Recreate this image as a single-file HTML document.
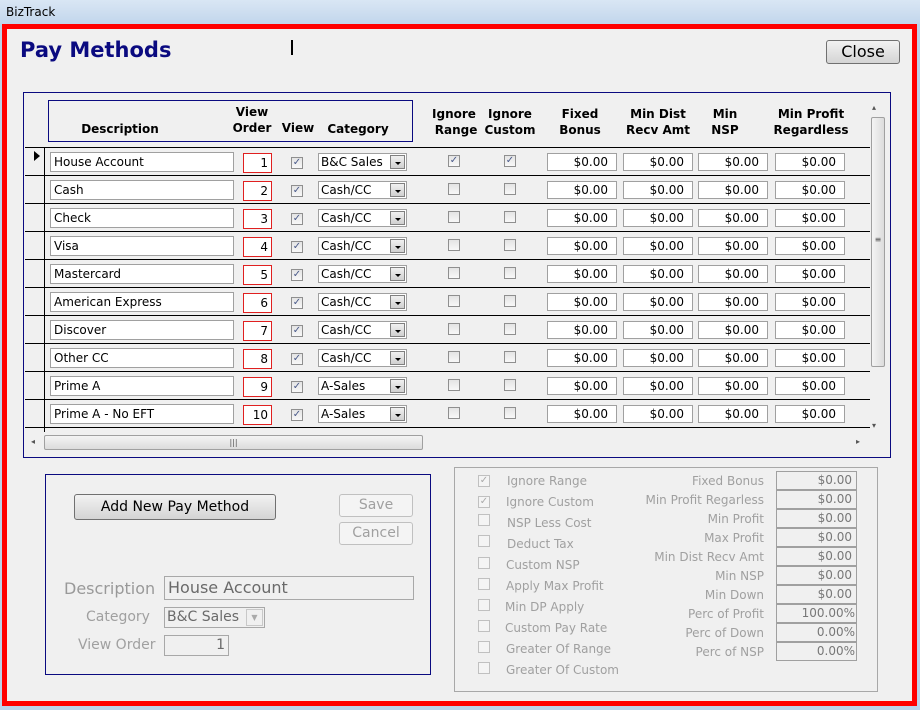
<!DOCTYPE html>
<html><head><meta charset="utf-8"><style>
*{box-sizing:border-box;margin:0;padding:0}
body{width:920px;height:710px;position:relative;overflow:hidden;background:#bcd3ea;font-family:"DejaVu Sans","Liberation Sans",sans-serif;font-size:12px;color:#000}
.a{position:absolute}
.tb{left:0;top:0;width:920px;height:24px;background:linear-gradient(#d9e6f4,#c2d6ec);font-size:12px;padding:5px 0 0 6px}
.frame{left:2px;top:24px;width:915px;height:682px;border:5px solid #f00;background:#f0f0f0}
.tx{background:#fff;border:1px solid #a0a0a0;height:20px;line-height:18px;padding:0 3px;white-space:nowrap;overflow:hidden}
.num{border:1px solid #e02020;background:#fff;text-align:right;padding-right:3px;height:20px;line-height:18px}
.cb{width:12px;height:12px;border:1px solid #8f8f8f;background:linear-gradient(#e4e4e4,#f8f8f8);font-size:10px;line-height:10px;text-align:center;color:#4a5a8a}
.sel{background:#fff;border:1px solid #a0a0a0;height:18px;line-height:16px;padding-left:2px}
.sel i{position:absolute;right:1px;top:1px;width:15px;height:14px;background:linear-gradient(#f0f0f0,#d0d0d0);border:1px solid #808080}
.sel i:after{content:"";position:absolute;left:4px;top:6px;border:3px solid transparent;border-top:3px solid #000}
.money{background:#fff;border:1px solid #a0a0a0;height:18px;line-height:16px;text-align:right;padding-right:8px;width:70px}
.hl{height:1px;background:#000;left:25px;width:845px}
.h{font-weight:bold;font-size:12px;line-height:16px;text-align:center}
.btn{border:1px solid #707070;border-radius:3px;background:linear-gradient(#f2f2f2,#e3e3e3 50%,#d4d4d4);text-align:center;font-size:14px;font-family:"DejaVu Sans",sans-serif}
.dis{color:#a0a0a0;border-color:#c0c0c0;background:#f4f4f4}
.gl{color:#a0a0a0;font-size:12px}
.rb{border:1px solid #a0a0a0;text-align:right;padding-right:4px;color:#777;height:19px;line-height:17px;width:81px;left:776px}
</style></head><body>
<div class="a tb">BizTrack</div>
<div class="a frame"></div>
<div class="a" style="left:20px;top:38px;font:bold 21px 'DejaVu Sans',sans-serif;color:#0a0a80">Pay Methods</div>
<div class="a" style="left:291px;top:40px;width:2px;height:15px;background:#000"></div>
<div class="a btn" style="left:826px;top:40px;width:74px;height:24px;line-height:22px;font-size:16px">Close</div>

<div class="a" style="left:23px;top:92px;width:868px;height:366px;border:1px solid #0a0a80"></div>
<div class="a" style="left:48px;top:100px;width:365px;height:42px;border:1px solid #0a0a80"></div>
<div class="a h" style="left:70px;top:121px;width:100px">Description</div>
<div class="a h" style="left:228px;top:104px;width:48px">View<br>Order</div>
<div class="a h" style="left:280px;top:120px;width:36px">View</div>
<div class="a h" style="left:323px;top:121px;width:70px">Category</div>
<div class="a h" style="left:424px;top:106px;width:60px">Ignore<br>&nbsp;Range</div>
<div class="a h" style="left:480px;top:106px;width:60px">Ignore<br>Custom</div>
<div class="a h" style="left:550px;top:106px;width:60px">Fixed<br>Bonus</div>
<div class="a h" style="left:620px;top:106px;width:76px">Min Dist<br>Recv Amt</div>
<div class="a h" style="left:700px;top:106px;width:50px">Min<br>NSP</div>
<div class="a h" style="left:770px;top:106px;width:82px">Min Profit<br>Regardless</div>
<div class="a hl" style="top:147px"></div>
<div class="a" style="left:44px;top:147px;width:1px;height:285px;background:#000"></div>
<div class="a" style="left:34px;top:151px;border:5px solid transparent;border-left:6px solid #000;border-right:0"></div>

<div class="a hl" style="top:175px"></div><div class="a hl" style="top:203px"></div><div class="a hl" style="top:231px"></div><div class="a hl" style="top:259px"></div><div class="a hl" style="top:287px"></div><div class="a hl" style="top:315px"></div><div class="a hl" style="top:343px"></div><div class="a hl" style="top:371px"></div><div class="a hl" style="top:399px"></div><div class="a hl" style="top:427px"></div>

<div class="a tx" style="left:50px;top:152px;width:184px">House Account</div>
<div class="a tx" style="left:50px;top:180px;width:184px">Cash</div>
<div class="a tx" style="left:50px;top:208px;width:184px">Check</div>
<div class="a tx" style="left:50px;top:236px;width:184px">Visa</div>
<div class="a tx" style="left:50px;top:264px;width:184px">Mastercard</div>
<div class="a tx" style="left:50px;top:292px;width:184px">American Express</div>
<div class="a tx" style="left:50px;top:320px;width:184px">Discover</div>
<div class="a tx" style="left:50px;top:348px;width:184px">Other CC</div>
<div class="a tx" style="left:50px;top:376px;width:184px">Prime A</div>
<div class="a tx" style="left:50px;top:404px;width:184px">Prime A - No EFT</div>

<div class="a num" style="left:243px;top:153px;width:29px">1</div>
<div class="a num" style="left:243px;top:181px;width:29px">2</div>
<div class="a num" style="left:243px;top:209px;width:29px">3</div>
<div class="a num" style="left:243px;top:237px;width:29px">4</div>
<div class="a num" style="left:243px;top:265px;width:29px">5</div>
<div class="a num" style="left:243px;top:293px;width:29px">6</div>
<div class="a num" style="left:243px;top:321px;width:29px">7</div>
<div class="a num" style="left:243px;top:349px;width:29px">8</div>
<div class="a num" style="left:243px;top:377px;width:29px">9</div>
<div class="a num" style="left:243px;top:405px;width:29px">10</div>

<div class="a cb" style="left:291px;top:157px">✓</div><div class="a cb" style="left:291px;top:185px">✓</div><div class="a cb" style="left:291px;top:213px">✓</div><div class="a cb" style="left:291px;top:241px">✓</div><div class="a cb" style="left:291px;top:269px">✓</div><div class="a cb" style="left:291px;top:297px">✓</div><div class="a cb" style="left:291px;top:325px">✓</div><div class="a cb" style="left:291px;top:353px">✓</div><div class="a cb" style="left:291px;top:381px">✓</div><div class="a cb" style="left:291px;top:409px">✓</div>

<div class="a sel" style="left:318px;top:153px;width:89px">B&amp;C Sales<i></i></div>
<div class="a sel" style="left:318px;top:181px;width:89px">Cash/CC<i></i></div>
<div class="a sel" style="left:318px;top:209px;width:89px">Cash/CC<i></i></div>
<div class="a sel" style="left:318px;top:237px;width:89px">Cash/CC<i></i></div>
<div class="a sel" style="left:318px;top:265px;width:89px">Cash/CC<i></i></div>
<div class="a sel" style="left:318px;top:293px;width:89px">Cash/CC<i></i></div>
<div class="a sel" style="left:318px;top:321px;width:89px">Cash/CC<i></i></div>
<div class="a sel" style="left:318px;top:349px;width:89px">Cash/CC<i></i></div>
<div class="a sel" style="left:318px;top:377px;width:89px">A-Sales<i></i></div>
<div class="a sel" style="left:318px;top:405px;width:89px">A-Sales<i></i></div>

<div class="a cb" style="left:448px;top:155px">✓</div><div class="a cb" style="left:504px;top:155px">✓</div>
<div class="a cb" style="left:448px;top:183px"></div><div class="a cb" style="left:504px;top:183px"></div>
<div class="a cb" style="left:448px;top:211px"></div><div class="a cb" style="left:504px;top:211px"></div>
<div class="a cb" style="left:448px;top:239px"></div><div class="a cb" style="left:504px;top:239px"></div>
<div class="a cb" style="left:448px;top:267px"></div><div class="a cb" style="left:504px;top:267px"></div>
<div class="a cb" style="left:448px;top:295px"></div><div class="a cb" style="left:504px;top:295px"></div>
<div class="a cb" style="left:448px;top:323px"></div><div class="a cb" style="left:504px;top:323px"></div>
<div class="a cb" style="left:448px;top:351px"></div><div class="a cb" style="left:504px;top:351px"></div>
<div class="a cb" style="left:448px;top:379px"></div><div class="a cb" style="left:504px;top:379px"></div>
<div class="a cb" style="left:448px;top:407px"></div><div class="a cb" style="left:504px;top:407px"></div>

<div class="a" style="left:547px;top:153px"><div class="money">$0.00</div></div><div class="a" style="left:623px;top:153px"><div class="money">$0.00</div></div><div class="a" style="left:698px;top:153px"><div class="money">$0.00</div></div><div class="a" style="left:775px;top:153px"><div class="money">$0.00</div></div>
<div class="a" style="left:547px;top:181px"><div class="money">$0.00</div></div><div class="a" style="left:623px;top:181px"><div class="money">$0.00</div></div><div class="a" style="left:698px;top:181px"><div class="money">$0.00</div></div><div class="a" style="left:775px;top:181px"><div class="money">$0.00</div></div>
<div class="a" style="left:547px;top:209px"><div class="money">$0.00</div></div><div class="a" style="left:623px;top:209px"><div class="money">$0.00</div></div><div class="a" style="left:698px;top:209px"><div class="money">$0.00</div></div><div class="a" style="left:775px;top:209px"><div class="money">$0.00</div></div>
<div class="a" style="left:547px;top:237px"><div class="money">$0.00</div></div><div class="a" style="left:623px;top:237px"><div class="money">$0.00</div></div><div class="a" style="left:698px;top:237px"><div class="money">$0.00</div></div><div class="a" style="left:775px;top:237px"><div class="money">$0.00</div></div>
<div class="a" style="left:547px;top:265px"><div class="money">$0.00</div></div><div class="a" style="left:623px;top:265px"><div class="money">$0.00</div></div><div class="a" style="left:698px;top:265px"><div class="money">$0.00</div></div><div class="a" style="left:775px;top:265px"><div class="money">$0.00</div></div>
<div class="a" style="left:547px;top:293px"><div class="money">$0.00</div></div><div class="a" style="left:623px;top:293px"><div class="money">$0.00</div></div><div class="a" style="left:698px;top:293px"><div class="money">$0.00</div></div><div class="a" style="left:775px;top:293px"><div class="money">$0.00</div></div>
<div class="a" style="left:547px;top:321px"><div class="money">$0.00</div></div><div class="a" style="left:623px;top:321px"><div class="money">$0.00</div></div><div class="a" style="left:698px;top:321px"><div class="money">$0.00</div></div><div class="a" style="left:775px;top:321px"><div class="money">$0.00</div></div>
<div class="a" style="left:547px;top:349px"><div class="money">$0.00</div></div><div class="a" style="left:623px;top:349px"><div class="money">$0.00</div></div><div class="a" style="left:698px;top:349px"><div class="money">$0.00</div></div><div class="a" style="left:775px;top:349px"><div class="money">$0.00</div></div>
<div class="a" style="left:547px;top:377px"><div class="money">$0.00</div></div><div class="a" style="left:623px;top:377px"><div class="money">$0.00</div></div><div class="a" style="left:698px;top:377px"><div class="money">$0.00</div></div><div class="a" style="left:775px;top:377px"><div class="money">$0.00</div></div>
<div class="a" style="left:547px;top:405px"><div class="money">$0.00</div></div><div class="a" style="left:623px;top:405px"><div class="money">$0.00</div></div><div class="a" style="left:698px;top:405px"><div class="money">$0.00</div></div><div class="a" style="left:775px;top:405px"><div class="money">$0.00</div></div>

<div class="a" style="left:28px;top:433px;width:842px;height:17px;background:#f0f0f0"></div>
<div class="a" style="left:44px;top:435px;width:379px;height:15px;border:1px solid #a0a0a0;border-radius:2px;background:linear-gradient(#f4f4f4,#dcdcdc);text-align:center;font-size:8px;line-height:13px;color:#555">|||</div>
<div class="a" style="left:31px;top:437px;font-size:8px;color:#555">◂</div>
<div class="a" style="left:856px;top:437px;font-size:8px;color:#555">▸</div>
<div class="a" style="left:870px;top:100px;width:15px;height:333px;background:#f0f0f0"></div>
<div class="a" style="left:872px;top:103px;font-size:8px;color:#555">▴</div>
<div class="a" style="left:872px;top:421px;font-size:8px;color:#555">▾</div>
<div class="a" style="left:871px;top:117px;width:14px;height:250px;border:1px solid #a0a0a0;border-radius:2px;background:linear-gradient(90deg,#f4f4f4,#dcdcdc);font-size:8px;color:#555;text-align:center;padding-top:117px">≡</div>

<div class="a" style="left:45px;top:474px;width:386px;height:201px;border:1px solid #0a0a80"></div>
<div class="a btn" style="left:74px;top:494px;width:202px;height:26px;line-height:24px">Add New Pay Method</div>
<div class="a btn dis" style="left:339px;top:494px;width:74px;height:23px;line-height:21px">Save</div>
<div class="a btn dis" style="left:339px;top:522px;width:74px;height:23px;line-height:21px">Cancel</div>
<div class="a gl" style="left:64px;top:579px;font-size:16px;color:#999">Description</div>
<div class="a" style="left:164px;top:576px;width:250px;height:24px;border:1px solid #a8a8a8;font-size:16px;line-height:22px;padding-left:3px;color:#6a6a6a">House Account</div>
<div class="a gl" style="left:86px;top:609px;font-size:14px">Category</div>
<div class="a" style="left:164px;top:607px;width:101px;height:21px;border:1px solid #a8a8a8;font-size:14px;line-height:19px;padding-left:2px;color:#6a6a6a">B&amp;C Sales<span class="a" style="right:1px;top:1px;width:17px;height:17px;border:1px solid #c8c8c8;font-size:8px;text-align:center;line-height:16px;color:#aaa">▼</span></div>
<div class="a gl" style="left:78px;top:637px;font-size:14px">View Order</div>
<div class="a" style="left:164px;top:635px;width:65px;height:21px;border:1px solid #a8a8a8;font-size:14px;line-height:19px;text-align:right;padding-right:3px;color:#6a6a6a">1</div>

<div class="a" style="left:454px;top:467px;width:424px;height:225px;border:1px solid #a8a8a8"></div>
<div class="a cb" style="left:478px;top:475px;color:#aaa;border-color:#c0c0c0;background:#f4f4f4">✓</div><div class="a gl" style="left:507px;top:474px">Ignore Range</div>
<div class="a cb" style="left:478px;top:496px;color:#aaa;border-color:#c0c0c0;background:#f4f4f4">✓</div><div class="a gl" style="left:506px;top:495px">Ignore Custom</div>
<div class="a cb" style="left:478px;top:514px;border-color:#c0c0c0;background:#f4f4f4"></div><div class="a gl" style="left:507px;top:516px">NSP Less Cost</div>
<div class="a cb" style="left:478px;top:535px;border-color:#c0c0c0;background:#f4f4f4"></div><div class="a gl" style="left:507px;top:537px">Deduct Tax</div>
<div class="a cb" style="left:478px;top:557px;border-color:#c0c0c0;background:#f4f4f4"></div><div class="a gl" style="left:506px;top:558px">Custom NSP</div>
<div class="a cb" style="left:478px;top:578px;border-color:#c0c0c0;background:#f4f4f4"></div><div class="a gl" style="left:506px;top:579px">Apply Max Profit</div>
<div class="a cb" style="left:478px;top:599px;border-color:#c0c0c0;background:#f4f4f4"></div><div class="a gl" style="left:505px;top:600px">Min DP Apply</div>
<div class="a cb" style="left:478px;top:620px;border-color:#c0c0c0;background:#f4f4f4"></div><div class="a gl" style="left:505px;top:621px">Custom Pay Rate</div>
<div class="a cb" style="left:478px;top:641px;border-color:#c0c0c0;background:#f4f4f4"></div><div class="a gl" style="left:506px;top:642px">Greater Of Range</div>
<div class="a cb" style="left:478px;top:662px;border-color:#c0c0c0;background:#f4f4f4"></div><div class="a gl" style="left:506px;top:663px">Greater Of Custom</div>

<div class="a gl" style="right:156px;top:474px">Fixed Bonus</div><div class="a rb" style="top:471px">$0.00</div>
<div class="a gl" style="right:156px;top:493px">Min Profit Regarless</div><div class="a rb" style="top:490px">$0.00</div>
<div class="a gl" style="right:156px;top:512px">Min Profit</div><div class="a rb" style="top:509px">$0.00</div>
<div class="a gl" style="right:156px;top:531px">Max Profit</div><div class="a rb" style="top:528px">$0.00</div>
<div class="a gl" style="right:156px;top:550px">Min Dist Recv Amt</div><div class="a rb" style="top:547px">$0.00</div>
<div class="a gl" style="right:156px;top:569px">Min NSP</div><div class="a rb" style="top:566px">$0.00</div>
<div class="a gl" style="right:156px;top:588px">Min Down</div><div class="a rb" style="top:585px">$0.00</div>
<div class="a gl" style="right:156px;top:607px">Perc of Profit</div><div class="a rb" style="top:604px;padding-right:1px">100.00%</div>
<div class="a gl" style="right:156px;top:626px">Perc of Down</div><div class="a rb" style="top:623px;padding-right:1px">0.00%</div>
<div class="a gl" style="right:156px;top:645px">Perc of NSP</div><div class="a rb" style="top:642px;padding-right:1px">0.00%</div>
</body></html>
